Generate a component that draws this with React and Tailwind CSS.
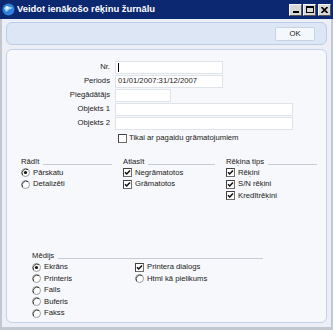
const font = { fontFamily: '"Liberation Sans", Arial, sans-serif' };

const Check = ({ checked }) => (
    <svg width="9" height="9" viewBox="0 0 9 9" className="shrink-0">
        <rect x="0.5" y="0.5" width="8" height="8" fill="#fff" stroke="#6d6d6d" />
        <path d="M0.5 8.5 V0.5 H8.5" fill="none" stroke="#404040" />
        {checked && <path d="M2 4.2 L3.7 6 L7 2.4" fill="none" stroke="#111" strokeWidth="1.5" />}
    </svg>
);

const Radio = ({ checked }) => (
    <svg width="9" height="9" viewBox="0 0 9 9" className="shrink-0">
        <circle cx="4.5" cy="4.5" r="4" fill="#fff" stroke="#9a9a9a" />
        <path d="M1.6 7 A4 4 0 0 1 7 1.6" fill="none" stroke="#404040" />
        {checked && <circle cx="4.5" cy="4.5" r="1.6" fill="#111" />}
    </svg>
);

const Field = ({ label, width, value }) => (
    <div className="flex items-center h-[14px]">
        <div className="w-[104px] text-right pr-[1px]">{label}</div>
        <div
            className="ml-[4px] h-[13px] border border-[#dfe3ea] bg-white flex items-center px-[2px]"
            style={{ width }}
        >
            {value}
        </div>
    </div>
);

const Heading = ({ text }) => (
    <div className="flex items-end h-[8px]">
        <span className="leading-none">{text}</span>
        <div className="flex-1 ml-[4px] mb-[1px] border-b border-[#c6ccd6]"></div>
    </div>
);

const Option = ({ type, checked, label }) => (
    <div className="flex items-center h-[11.5px]">
        {type === "radio" ? <Radio checked={checked} /> : <Check checked={checked} />}
        <span className="ml-[3px] leading-none">{label}</span>
    </div>
);

const App = () => {
    return (
        <div className="w-[333px] h-[330px] flex flex-col text-[7.7px] text-[#1a1a1a]" style={font}>
            {/* Title bar */}
            <div className="h-[19px] bg-[#0b2870] flex items-center pl-[2px] pr-[2px]">
                <svg width="13" height="13" viewBox="0 0 13 13">
                    <circle cx="6.5" cy="6.5" r="6" fill="#2f7fd8" />
                    <path d="M2 5 Q6 2 11 5 Q7 6 4 9 Z" fill="#9fd4ff" />
                    <circle cx="5" cy="4.5" r="1.6" fill="#e8f6ff" />
                </svg>
                <span className="ml-[2px] text-white font-bold text-[9.4px]">Veidot ienākošo rēķinu žurnālu</span>
                <div className="ml-auto flex gap-[1px]">
                    <div className="w-[13px] h-[12px] bg-[#d8d8d8] border border-[#f4f4f4] border-r-[#555] border-b-[#555] flex items-end justify-center pb-[2px]">
                        <div className="w-[6px] h-[2px] bg-black"></div>
                    </div>
                    <div className="w-[13px] h-[12px] bg-[#d8d8d8] border border-[#f4f4f4] border-r-[#555] border-b-[#555] flex items-center justify-center">
                        <div className="w-[8px] h-[7px] border border-black border-t-2"></div>
                    </div>
                    <div className="ml-[1px] w-[13px] h-[12px] bg-[#d8d8d8] border border-[#f4f4f4] border-r-[#555] border-b-[#555] flex items-center justify-center">
                        <svg width="7" height="6" viewBox="0 0 7 6">
                            <path d="M0.5 0 L6.5 6 M6.5 0 L0.5 6" stroke="#000" strokeWidth="1.6" />
                        </svg>
                    </div>
                </div>
            </div>

            {/* Body */}
            <div className="flex-1 flex flex-col bg-[#ecf0f6] border-x-[2px] border-b-[3px] border-[#c3c7cf] px-[4px]">
                {/* Toolbar */}
                <div className="mt-[3px] h-[23px] rounded-[6px] border border-[#bccde6] bg-[#dce6f4] flex items-center justify-end pr-[11px]">
                    <button className="w-[40px] h-[14px] rounded-[2px] border border-[#c7d3e4] bg-[#f4f7fb] text-[7.7px] leading-none">
                        OK
                    </button>
                </div>

                {/* Main panel */}
                <div className="mt-[4px] h-[274px] rounded-[6px] border border-[#c4d2e6] bg-[#f6f8fb] pt-[10px]">
                    <div className="flex flex-col">
                        <Field label="Nr." width={108} value={<div className="w-px h-[9px] bg-black"></div>} />
                        <Field label="Periods" width={108} value="01/01/2007:31/12/2007" />
                        <Field label="Piegādātājs" width={56} />
                        <Field label="Objekts 1" width={178} />
                        <Field label="Objekts 2" width={178} />
                        <div className="flex items-center h-[12px] ml-[111px] mt-[2px]">
                            <Check />
                            <span className="ml-[2px]">Tikai ar pagaidu grāmatojumiem</span>
                        </div>
                    </div>

                    <div className="mt-[14px] ml-[14px] grid grid-cols-[91px_92px_91px] gap-x-[11px]">
                        <div>
                            <Heading text="Rādīt" />
                            <div className="mt-[1px]">
                                <Option type="radio" checked label="Pārskatu" />
                                <Option type="radio" label="Detalizēti" />
                            </div>
                        </div>
                        <div>
                            <Heading text="Atlasīt" />
                            <div className="mt-[1px]">
                                <Option type="check" checked label="Negrāmatotos" />
                                <Option type="check" checked label="Grāmatotos" />
                            </div>
                        </div>
                        <div>
                            <Heading text="Rēķina tips" />
                            <div className="mt-[1px]">
                                <Option type="check" checked label="Rēķini" />
                                <Option type="check" checked label="S/N rēķini" />
                                <Option type="check" checked label="Kredītrēķini" />
                            </div>
                        </div>
                    </div>

                    <div className="mt-[50px] ml-[25px] w-[231px]">
                        <Heading text="Mēdijs" />
                        <div className="mt-[2px] flex">
                            <div className="w-[103px]">
                                <Option type="radio" checked label="Ekrāns" />
                                <Option type="radio" label="Printeris" />
                                <Option type="radio" label="Fails" />
                                <Option type="radio" label="Buferis" />
                                <Option type="radio" label="Fakss" />
                            </div>
                            <div>
                                <Option type="check" checked label="Printera dialogs" />
                                <Option type="radio" label="Html kā pielikums" />
                            </div>
                        </div>
                    </div>
                </div>
            </div>
        </div>
    );
};

export default App;
